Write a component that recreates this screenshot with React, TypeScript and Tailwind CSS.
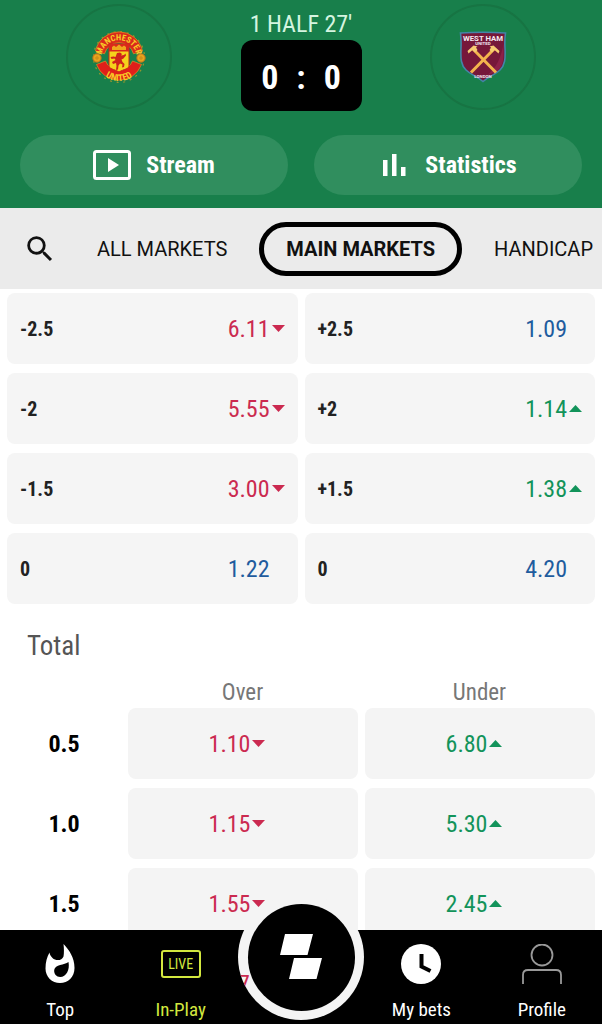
import type { ReactNode } from 'react';
import clsx from 'clsx';
import { MdSearch } from 'react-icons/md';

type Trend = 'up' | 'down' | 'flat';

interface Odd {
  price: string;
  trend: Trend;
}

const TABS = ['ALL MARKETS', 'MAIN MARKETS', 'HANDICAP'];

const HANDICAPS: (Odd & { line: string })[] = [
  { line: '-2.5', price: '6.11', trend: 'down' },
  { line: '+2.5', price: '1.09', trend: 'flat' },
  { line: '-2', price: '5.55', trend: 'down' },
  { line: '+2', price: '1.14', trend: 'up' },
  { line: '-1.5', price: '3.00', trend: 'down' },
  { line: '+1.5', price: '1.38', trend: 'up' },
  { line: '0', price: '1.22', trend: 'flat' },
  { line: '0', price: '4.20', trend: 'flat' },
];

const TOTALS: { line: string; over: Odd; under: Odd }[] = [
  { line: '0.5', over: { price: '1.10', trend: 'down' }, under: { price: '6.80', trend: 'up' } },
  { line: '1.0', over: { price: '1.15', trend: 'down' }, under: { price: '5.30', trend: 'up' } },
  { line: '1.5', over: { price: '1.55', trend: 'down' }, under: { price: '2.45', trend: 'up' } },
];

function Price({ price, trend }: Odd) {
  return (
    <span
      className={clsx(
        'flex items-center gap-[2px] text-2xl',
        trend === 'down' && 'text-[#cb2a50]',
        trend === 'up' && 'text-[#12935a]',
        trend === 'flat' && 'text-[#1f5c9e]'
      )}
    >
      {price}
      <svg viewBox="0 0 13 7" className="w-[13px] h-[7px]" fill="currentColor" aria-hidden="true">
        {trend === 'down' && <path d="M0 0h13L6.5 7z" />}
        {trend === 'up' && <path d="M0 7h13L6.5 0z" />}
      </svg>
    </span>
  );
}

function UnitedCrest() {
  return (
    <svg viewBox="0 0 54 54" className="w-[54px] h-[54px]" role="img" aria-label="Manchester United">
      <defs>
        <path id="mu-top" d="M9.5 26A17.6 17.6 0 0 1 44.5 26" />
        <path id="mu-bottom" d="M6 38A23.4 23.4 0 0 0 48 38" />
      </defs>
      <circle cx="27" cy="27" r="25.5" fill="none" stroke="#8f962f" strokeWidth="1.2" strokeDasharray="2 4.7" />
      <path d="M3.500 21A24 24 0 0 1 50.500 21L41.500 23.800A15 15 0 0 0 12.500 23.800z" fill="#d92a1c" stroke="#e2921f" strokeWidth=".7" />
      <path d="M4.500 34.500A24 24 0 0 0 49.500 34.500L40.500 31A14.500 14.500 0 0 1 13.500 31z" fill="#e01f1a" stroke="#e2921f" strokeWidth=".7" />
      <circle cx="5" cy="28" r="4.2" fill="#e8a41c" stroke="#b9701c" />
      <circle cx="49" cy="28" r="4.2" fill="#e8a41c" stroke="#b9701c" />
      <path d="M3 28h4M5 26v4M47 28h4M49 26v4" stroke="#c98a1a" />
      <path d="M17 14h20v22c0 3-5 3-10 6-5-3-10-3-10-6z" fill="#f5d21c" stroke="#c9221a" />
      <path d="M17 14h20v7.500H17z" fill="#d9281c" />
      <path d="M20 20v-3l2-1.500 2 1.500 3-2.500 3 2.500 2-1.500 2 1.500v3z" fill="#f0a51c" />
      <path
        d="M25 23l3-.5 2 1.500-1 1.500 3-.5 1.500-1.500 .5 2-2.500 3-2 1 1 2.500 2 2-.5 3-2 .5 .5-3-2.500-1-1.500 2-.5 4-2 .5 .5-4-.5-3-3 1-1-2 3.500-2-1-1.500-3 .5-1-2 3-.5 2 .5z"
        fill="#cf231b"
      />
      <g fill="#f9c926" fontWeight="700" textAnchor="middle" fontFamily="Roboto Condensed, Roboto, sans-serif">
        <text fontSize="8.5">
          <textPath href="#mu-top" startOffset="50%">MANCHESTER</textPath>
        </text>
        <text fontSize="9.5">
          <textPath href="#mu-bottom" startOffset="50%">UNITED</textPath>
        </text>
      </g>
    </svg>
  );
}

function WestHamCrest() {
  return (
    <svg viewBox="0 0 48 52" className="w-[48px] h-[52px]" role="img" aria-label="West Ham United">
      <path
        d="M1.5 2Q24 .5 46.5 2q-1 7-.5 15c.5 11 0 17-5 22-5 5-11 6-17 11.5C18 45 12 44 7 39 2 34 1.500 28 2 17 2.300 9 2 6 1.500 2z"
        fill="#76183a"
        stroke="#4385a8"
        strokeWidth="1.600"
      />
      <path d="M26 46c5-4 11-4 15-9 4-6 3.500-12 3.500-20V12c-2 14-7 26-18.500 34z" fill="#8c2148" />
      <g stroke="#f3b44d" strokeWidth="3">
        <path d="M12 41.500L36 17M37 41.500L13 17" />
      </g>
      <path d="M8.500 20l6-5.500 4 1-1.500 1 1.500 2.500-2.500 2.500-2.500-2.500-4 3.500zM40.500 20l-6-5.500-4 1 1.500 1-1.500 2.500L33 21.500l2.500-2.500 4 3.500z" fill="#f7cb73" />
      <g fill="#f4e9ee" textAnchor="middle" fontFamily="Roboto, sans-serif" fontWeight="700">
        <text x="24" y="9.500" fontSize="7.800">WEST HAM</text>
        <text x="24" y="14" fontSize="4.400">UNITED</text>
        <text x="24" y="47" fontSize="4.400">LONDON</text>
      </g>
    </svg>
  );
}

function TeamBadge({ children }: { children: ReactNode }) {
  return (
    <div className="flex size-[106px] items-center justify-center rounded-full border-2 border-[#177443]">
      {children}
    </div>
  );
}

function NavItem({ label, active, children }: { label: string; active?: boolean; children: ReactNode }) {
  return (
    <a
      href="#"
      className={clsx(
        'flex flex-1 flex-col items-center gap-3 pt-3 text-[19px] leading-6',
        active ? 'text-[#d3e83f]' : 'text-white'
      )}
    >
      <span className="flex h-11 items-center">{children}</span>
      {label}
    </a>
  );
}

export default function App() {
  return (
    <div className="flex h-screen flex-col overflow-hidden bg-white font-['Roboto_Condensed',Roboto,sans-serif]">
      {/* Scoreboard */}
      <header className="shrink-0 bg-[#187f4b] px-5 pt-1 pb-[13px] text-white">
        <div className="flex items-start justify-between px-[46px]">
          <TeamBadge>
            <UnitedCrest />
          </TeamBadge>
          <div className="flex flex-col items-center pt-1">
            <p className="text-2xl text-[#d5f5e0]">1 HALF 27'</p>
            <p className="flex h-[71px] w-[121px] items-center justify-center gap-[18px] rounded-xl bg-black pt-1 text-[34px] font-bold">
              <span>0</span>
              <span>:</span>
              <span>0</span>
            </p>
          </div>
          <TeamBadge>
            <WestHamCrest />
          </TeamBadge>
        </div>
        <div className="mt-6 grid grid-cols-2 gap-[26px]">
          <button className="flex h-[60px] items-center justify-center gap-[15px] rounded-full bg-[#308e5e] text-2xl font-bold">
            <svg viewBox="0 0 38 30" className="w-[38px] h-[30px]" aria-hidden="true">
              <rect x="1.500" y="1.500" width="35" height="27" rx="2" fill="none" stroke="#fff" strokeWidth="3" />
              <path d="M15 8v14l11-7z" fill="#fff" />
            </svg>
            Stream
          </button>
          <button className="flex h-[60px] items-center justify-center gap-[19px] rounded-full bg-[#308e5e] pl-1 text-2xl font-bold">
            <svg viewBox="0 0 23 22" className="w-[23px] h-[22px]" fill="#fff" aria-hidden="true">
              <path d="M0 6h4.500v16H0zM9 0h4.500v22H9zM18 13h4.500v9H18z" />
            </svg>
            Statistics
          </button>
        </div>
      </header>

      {/* Market tabs */}
      <nav className="flex h-[81px] shrink-0 items-center overflow-hidden bg-[#ebebeb] pl-[23px] font-[Roboto,sans-serif] text-xl text-[#111]">
        <button aria-label="Search" className="mr-10 shrink-0">
          <MdSearch className="size-[34px]" />
        </button>
        {TABS.map((tab) => (
          <button
            key={tab}
            className={clsx(
              'shrink-0 whitespace-nowrap',
              tab === 'MAIN MARKETS' && 'mx-8 h-[54px] rounded-full border-5 border-black px-[22px] font-bold'
            )}
          >
            {tab}
          </button>
        ))}
      </nav>

      <main className="min-h-0 flex-1 overflow-y-auto px-[7px] pt-1 [scrollbar-width:none]">
        <div className="grid grid-cols-2 gap-x-[7px] gap-y-[9px]">
          {HANDICAPS.map((odd, i) => (
            <button
              key={i}
              className="flex h-[71px] items-center justify-between rounded-lg bg-[#f5f5f5] px-[13px]"
            >
              <span className="text-xl font-bold text-[#222]">{odd.line}</span>
              <Price price={odd.price} trend={odd.trend} />
            </button>
          ))}
        </div>

        <h2 className="pt-6 pl-5 text-[27px] leading-9 text-[#555]">Total</h2>

        <table className="w-full table-fixed">
          <thead>
            <tr className="h-11 align-bottom text-[23px] leading-[30px] text-[#777]">
              <td className="w-[114px]" />
              <th scope="col" className="pl-[6px] font-normal">Over</th>
              <th scope="col" className="pl-[6px] font-normal">Under</th>
            </tr>
          </thead>
          <tbody>
            {TOTALS.map((row) => (
              <tr key={row.line}>
                <th scope="row" className="pb-[9px] text-2xl font-bold text-black">{row.line}</th>
                {[row.over, row.under].map((odd) => (
                  <td key={odd.price} className="pb-[9px] pl-[7px]">
                    <button className="flex h-[71px] w-full items-center justify-center rounded-lg bg-[#f4f4f4] pr-3">
                      <Price price={odd.price} trend={odd.trend} />
                    </button>
                  </td>
                ))}
              </tr>
            ))}
          </tbody>
        </table>
      </main>

      {/* Bottom bar */}
      <nav className="relative flex h-[94px] shrink-0 bg-black">
        <NavItem label="Top">
          <svg viewBox="0 0 30 40" className="w-[30px] h-10" aria-hidden="true">
            <path
              d="M18.500 0C19 4 19.200 9 18.500 12.500c-1.500 4.500-8 4.500-11 1.500C5.500 12 4.800 10.500 4.500 8.500 2 13 .5 18 .5 24.500.5 33 7 39 15 39s14.500-6 14.500-15C29.500 13 24 6 18.500 0z"
              fill="#fff"
            />
            <path d="M23.500 18c-4 3-13.500 2.500-14.300 8-.4 4 2.300 7 6 7 6 0 9.800-7 8.300-15z" fill="#000" />
          </svg>
        </NavItem>
        <NavItem label="In-Play" active>
          <span className="flex h-7 w-10 items-center justify-center rounded-[3px] border-2 border-[#d3e83f] text-sm">
            LIVE
          </span>
        </NavItem>
        <div className="flex-1" />
        <NavItem label="My bets">
          <svg viewBox="0 0 40 40" className="size-10" aria-hidden="true">
            <circle cx="20" cy="20" r="20" fill="#fff" />
            <path d="M20.500 10v12.500L29.500 27" fill="none" stroke="#000" strokeWidth="4" />
          </svg>
        </NavItem>
        <NavItem label="Profile">
          <svg viewBox="0 0 40 40" className="size-10" fill="none" stroke="#999" strokeWidth="1.800" aria-hidden="true">
            <circle cx="20" cy="11" r="10.500" />
            <path d="M1 40v-9c0-3 2-5 5-5h28c3 0 5 2 5 5v9" />
          </svg>
        </NavItem>

        {/* Bet slip button with a price showing through its rim */}
        <button
          aria-label="Bet slip"
          className="absolute -top-9 left-1/2 flex size-[126px] -translate-x-1/2 items-center justify-center overflow-hidden rounded-full bg-[#f4f4f4]"
        >
          <span className="absolute top-[74px] left-0 text-2xl text-[#cb2a50]" aria-hidden="true">7</span>
          <span className="relative flex size-[107px] items-center justify-center rounded-full bg-black">
            <svg viewBox="0 0 44 46" className="w-[44px] h-[46px]" fill="#fff" aria-hidden="true">
              <path d="M6 0h28l-5.500 21H1zM15 24h28l-5.500 21H10z" />
            </svg>
          </span>
        </button>
      </nav>
    </div>
  );
}
